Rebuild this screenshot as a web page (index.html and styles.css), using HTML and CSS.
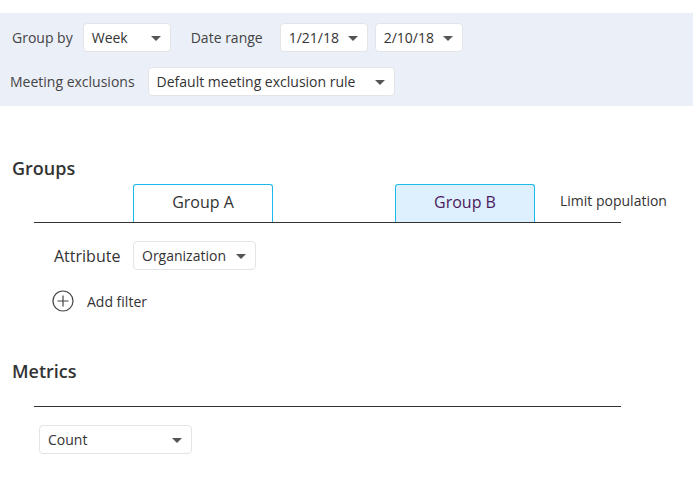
FILE: index.html
```html
<!DOCTYPE html>
<html>
<head>
<meta charset="utf-8">
<link rel="stylesheet" href="styles.css">
</head>
<body>
<div class="filters">
  <div class="row">
    <span class="label">Group by</span>
    <div class="select w88 ml10"><span>Week</span><i class="caret"></i></div>
    <span class="label ml20">Date range</span>
    <div class="select w88 ml17"><span>1/21/18</span><i class="caret"></i></div>
    <div class="select w88 ml7"><span>2/10/18</span><i class="caret"></i></div>
  </div>
  <div class="row row2">
    <span class="label">Meeting exclusions</span>
    <div class="select w246 ml13"><span>Default meeting exclusion rule</span><i class="caret"></i></div>
  </div>
</div>

<h2 class="heading groups-h">Groups</h2>
<div class="tabs">
  <div class="tab">Group A</div>
  <div class="tab active">Group B</div>
  <div class="limit">Limit population</div>
</div>
<div class="attr-row">
  <span class="attr-label">Attribute</span>
  <div class="select w122"><span>Organization</span><i class="caret"></i></div>
</div>
<div class="add-filter">
  <svg class="plus" width="22" height="22" viewBox="0 0 22 22"><circle cx="11" cy="11" r="10" fill="none" stroke="#444" stroke-width="1.2"/><path d="M11 5.5v11M5.5 11h11" stroke="#444" stroke-width="1.2"/></svg>
  <span>Add filter</span>
</div>

<h2 class="heading metrics-h">Metrics</h2>
<div class="rule"></div>
<div class="select w152 count"><span>Count</span><i class="caret"></i></div>
</body>
</html>
```
FILE: styles.css
```css
body {
  margin: 0;
  font-family: "Open Sans", "Noto Sans", sans-serif;
  font-size: 14px;
  color: #333;
  background: #fff;
}
.filters {
  margin-top: 13px;
  background: #ebeff8;
  padding: 10px 0 11px 0;
  height: 72px;
  box-sizing: content-box;
}
.row {
  display: flex;
  align-items: center;
  height: 29px;
  padding-left: 12px;
}
.row2 {
  margin-top: 15px;
  padding-left: 10px;
}
.label {
  color: #444;
}
.select {
  position: relative;
  box-sizing: border-box;
  height: 29px;
  background: #fff;
  border: 1px solid #e2e4e8;
  border-radius: 4px;
  display: flex;
  align-items: center;
  padding-left: 8px;
  color: #333;
}
.caret {
  position: absolute;
  right: 9px;
  top: 12px;
  width: 0;
  height: 0;
  border-left: 5px solid transparent;
  border-right: 5px solid transparent;
  border-top: 5px solid #555;
}
.w88 { width: 88px; }
.w246 { width: 247px; }
.w122 { width: 123px; }
.w152 { width: 153px; }
.ml10 { margin-left: 10px; }
.ml20 { margin-left: 20px; }
.ml17 { margin-left: 17px; }
.ml7 { margin-left: 7px; }
.ml13 { margin-left: 13px; }

.heading {
  margin: 0;
  font-size: 18px;
  font-weight: 600;
  color: #333;
  padding-left: 12px;
  line-height: 24px;
}
.groups-h { margin-top: 50px; }
.tabs {
  margin: 4px 72px 0 34px;
  height: 38px;
  border-bottom: 1px solid #333;
  display: flex;
  align-items: flex-end;
  position: relative;
}
.tab {
  box-sizing: border-box;
  width: 140px;
  height: 38px;
  padding-bottom: 3px;
  border: 1px solid #1cb9ea;
  border-bottom: none;
  border-radius: 3px 3px 0 0;
  background: #fff;
  display: flex;
  justify-content: center;
  align-items: center;
  font-size: 16px;
  color: #333;
  margin-left: 99px;
}
.tab.active {
  margin-left: 122px;
  background: #def0fd;
  color: #4b1a5d;
}
.limit {
  position: absolute;
  left: 526px;
  top: 7px;
  white-space: nowrap;
  color: #333;
}
.attr-row {
  display: flex;
  align-items: center;
  margin-top: 18px;
  padding-left: 54px;
}
.attr-label {
  width: 79px;
  font-size: 16px;
  color: #333;
}
.add-filter {
  display: flex;
  align-items: center;
  margin-top: 20px;
  padding-left: 52px;
}
.add-filter span {
  margin-left: 13px;
  color: #333;
}
.metrics-h { margin-top: 47px; }
.rule {
  margin: 23px 72px 0 34px;
  border-top: 1px solid #333;
}
.count {
  margin: 18px 0 0 39px;
}
```
